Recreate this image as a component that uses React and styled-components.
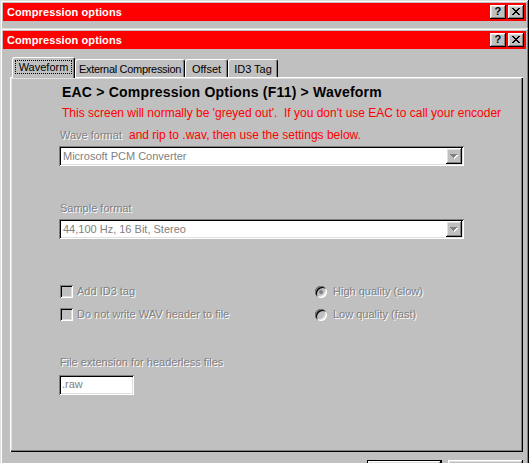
import React from "react";
import styled, { createGlobalStyle } from "styled-components";

const GlobalStyle = createGlobalStyle`
  html, body {
    margin: 0;
    padding: 0;
    background: #fff;
    overflow: hidden;
  }
  body {
    font-family: "Liberation Sans", Arial, sans-serif;
    font-size: 11px;
    color: #000;
  }
  * {
    box-sizing: border-box;
  }
`;

const raised =
  "box-shadow: inset -1px -1px #000, inset 1px 1px #dfdfdf, inset -2px -2px #808080, inset 2px 2px #fff;";
const buttonRaised =
  "box-shadow: inset -1px -1px #000, inset 1px 1px #fff, inset -2px -2px #808080, inset 2px 2px #dfdfdf;";
const sunken =
  "box-shadow: inset 1px 1px #808080, inset -1px -1px #fff, inset 2px 2px #000, inset -2px -2px #dfdfdf;";

const Desktop = styled.div`
  width: 532px;
  height: 463px;
  overflow: hidden;
  background: #fff;
`;

const BackWindow = styled.div`
  width: 529px;
  height: 28px;
  padding: 3px 3px 0;
  background: #c0c0c0;
  box-shadow: inset -1px 0 #000, inset 1px 1px #dfdfdf, inset -2px 0 #808080,
    inset 2px 2px #fff;
`;

const Window = styled.div`
  width: 529px;
  height: 480px;
  padding: 3px;
  background: #c0c0c0;
  ${raised}
  display: flex;
  flex-direction: column;
`;

const TitleBar = styled.div`
  height: 18px;
  background: #f00;
  color: #fff;
  display: flex;
  align-items: center;
  padding: 0 2px 0 4px;
  font-weight: bold;
  font-size: 11px;
  letter-spacing: 0.1px;
`;

const TitleText = styled.span`
  flex: 1;
`;

const TitleButtons = styled.div`
  display: flex;
  gap: 2px;
`;

const TitleButton = styled.div`
  width: 16px;
  height: 14px;
  background: #c0c0c0;
  ${buttonRaised}
  display: flex;
  align-items: center;
  justify-content: center;
  color: #000;
  font-size: 11px;
  font-weight: bold;
  line-height: 1;
  padding-bottom: 1px;
`;

const Body = styled.div`
  padding: 8px 3px 0 7px;
  display: flex;
  flex-direction: column;
`;

const TabRow = styled.div`
  display: flex;
  align-items: flex-end;
  height: 20px;
  padding-left: 2px;
`;

const Tab = styled.div`
  position: relative;
  width: ${(p) => p.$w}px;
  height: ${(p) => (p.$active ? 21 : 18)}px;
  margin-bottom: ${(p) => (p.$active ? -1 : 0)}px;
  z-index: ${(p) => (p.$active ? 1 : 0)};
  background: #c0c0c0;
  border-top: 1px solid #fff;
  border-left: 1px solid #fff;
  border-right: 1px solid #000;
  border-radius: 3px 3px 0 0;
  box-shadow: inset -1px 0 #808080;
  display: flex;
  align-items: center;
  justify-content: center;
  padding-bottom: ${(p) => (p.$active ? 2 : 0)}px;
  font-size: 11px;
  letter-spacing: ${(p) => p.$ls || 0}px;
  white-space: nowrap;
`;

const Focus = styled.span`
  border: 1px dotted #000;
  padding: 0 3px;
  line-height: 12px;
`;

const Panel = styled.div`
  height: 375px;
  background: #c0c0c0;
  box-shadow: inset 1px 1px #fff, inset -1px -1px #000, inset -2px -2px #808080,
    inset 2px 2px #dfdfdf;
  padding: 7px 0 0 49px;
  display: flex;
  flex-direction: column;
`;

const Heading = styled.div`
  font-size: 14px;
  font-weight: bold;
  line-height: 16px;
  letter-spacing: 0.2px;
  margin-left: 3px;
  color: #000;
`;

const Note = styled.div`
  color: #f00;
  font-size: 12px;
  line-height: 14px;
  margin-top: ${(p) => p.$top || 0}px;
  margin-left: ${(p) => p.$left || 0}px;
  white-space: nowrap;
`;

const LabelRow = styled.div`
  display: flex;
  align-items: center;
  height: 14px;
  margin-top: 8px;
`;

const Disabled = styled.div`
  color: #808080;
  text-shadow: 1px 1px 0 #fff;
  font-size: 11px;
  line-height: 13px;
  margin-left: ${(p) => p.$left ?? 1}px;
  margin-top: ${(p) => p.$top || 0}px;
  width: ${(p) => (p.$w ? `${p.$w}px` : "auto")};
  white-space: nowrap;
`;

const Combo = styled.div`
  width: 405px;
  height: 20px;
  margin-top: 4px;
  padding: 2px;
  background: #fff;
  ${sunken}
  display: flex;
  align-items: center;
`;

const ComboText = styled.span`
  flex: 1;
  padding-left: 2px;
  color: #808080;
  font-size: 11px;
`;

const DropButton = styled.div`
  width: 16px;
  height: 16px;
  background: #c0c0c0;
  ${buttonRaised}
  display: flex;
  align-items: center;
  justify-content: center;
`;

const OptionGrid = styled.div`
  display: grid;
  grid-template-columns: 255px auto;
  row-gap: 10px;
  margin: 46px 0 0 1px;
`;

const Option = styled.div`
  display: flex;
  align-items: center;
  height: 13px;
  gap: ${(p) => (p.$radio ? 6 : 4)}px;
`;

const CheckBox = styled.span`
  width: 13px;
  height: 13px;
  background: #c0c0c0;
  ${sunken}
`;

const Radio = styled.span`
  width: 12px;
  height: 12px;
  border-radius: 50%;
  background: #c0c0c0;
  box-shadow: inset 1px 1px #808080, inset -1px -1px #fff, inset 2px 2px #000,
    inset -2px -2px #dfdfdf;
  display: flex;
  align-items: center;
  justify-content: center;
  &::after {
    content: "";
    width: 4px;
    height: 4px;
    border-radius: 50%;
    background: ${(p) => (p.$on ? "#808080" : "transparent")};
  }
`;

const TextBox = styled.div`
  width: 75px;
  height: 20px;
  margin-top: 6px;
  padding: 3px 3px 0;
  background: #fff;
  ${sunken}
  color: #808080;
  font-size: 11px;
  line-height: 13px;
`;

const ButtonRow = styled.div`
  display: flex;
  justify-content: flex-end;
  gap: 6px;
  margin-top: 8px;
`;

const Button = styled.div`
  width: 75px;
  height: 23px;
  background: #c0c0c0;
  box-shadow: ${(p) =>
    p.$default
      ? "inset 0 0 0 1px #000, inset -2px -2px #000, inset 2px 2px #fff, inset -3px -3px #808080, inset 3px 3px #dfdfdf"
      : "inset -1px -1px #000, inset 1px 1px #fff, inset -2px -2px #808080, inset 2px 2px #dfdfdf"};
`;

const closeGlyph = [
  "11000011",
  "01100110",
  "00111100",
  "00011000",
  "00111100",
  "01100110",
  "11000011",
];

const CloseIcon = () => (
  <svg width="8" height="7" viewBox="0 0 8 7" shapeRendering="crispEdges">
    {closeGlyph.map((row, y) =>
      row
        .split("")
        .map((c, x) =>
          c === "1" ? (
            <rect key={`${x}-${y}`} x={x} y={y} width="1" height="1" fill="#000" />
          ) : null
        )
    )}
  </svg>
);

const DownArrow = () => (
  <svg width="8" height="5" viewBox="0 0 8 5" shapeRendering="crispEdges">
    <path d="M1 1h7v1h-1v1h-1v1h-1v1h-1v-1h-1v-1h-1v-1h-1z" fill="#fff" />
    <path d="M0 0h7v1h-1v1h-1v1h-1v1h-1v-1h-1v-1h-1v-1h-1z" fill="#808080" />
  </svg>
);

const Title = () => (
  <TitleBar>
    <TitleText>Compression options</TitleText>
    <TitleButtons>
      <TitleButton>?</TitleButton>
      <TitleButton>
        <CloseIcon />
      </TitleButton>
    </TitleButtons>
  </TitleBar>
);

const tabs = [
  { label: "Waveform", w: 63, active: true },
  { label: "External Compression", w: 110, ls: -0.3 },
  { label: "Offset", w: 43 },
  { label: "ID3 Tag", w: 50 },
];

const App = () => {
  return (
    <Desktop>
      <GlobalStyle />
      <BackWindow>
        <Title />
      </BackWindow>
      <Window>
        <Title />
        <Body>
          <TabRow>
            {tabs.map((t) => (
              <Tab key={t.label} $w={t.w} $active={t.active} $ls={t.ls}>
                {t.active ? <Focus>{t.label}</Focus> : t.label}
              </Tab>
            ))}
          </TabRow>
          <Panel>
            <Heading>EAC &gt; Compression Options (F11) &gt; Waveform</Heading>
            <Note $top={6} $left={3}>
              This screen will normally be 'greyed out'.&nbsp; If you don't use
              EAC to call your encoder
            </Note>
            <LabelRow>
              <Disabled $w={69}>Wave format</Disabled>
              <Note>and rip to .wav, then use the settings below.</Note>
            </LabelRow>
            <Combo>
              <ComboText>Microsoft PCM Converter</ComboText>
              <DropButton>
                <DownArrow />
              </DropButton>
            </Combo>
            <Disabled $top={36}>Sample format</Disabled>
            <Combo>
              <ComboText>44,100 Hz, 16 Bit, Stereo</ComboText>
              <DropButton>
                <DownArrow />
              </DropButton>
            </Combo>
            <OptionGrid>
              <Option>
                <CheckBox />
                <Disabled $left={0}>Add ID3 tag</Disabled>
              </Option>
              <Option $radio>
                <Radio $on />
                <Disabled $left={0}>High quality (slow)</Disabled>
              </Option>
              <Option>
                <CheckBox />
                <Disabled $left={0}>Do not write WAV header to file</Disabled>
              </Option>
              <Option $radio>
                <Radio />
                <Disabled $left={0}>Low quality (fast)</Disabled>
              </Option>
            </OptionGrid>
            <Disabled $top={35}>File extension for headerless files</Disabled>
            <TextBox>.raw</TextBox>
          </Panel>
          <ButtonRow>
            <Button $default />
            <Button />
          </ButtonRow>
        </Body>
      </Window>
    </Desktop>
  );
};

export default App;
